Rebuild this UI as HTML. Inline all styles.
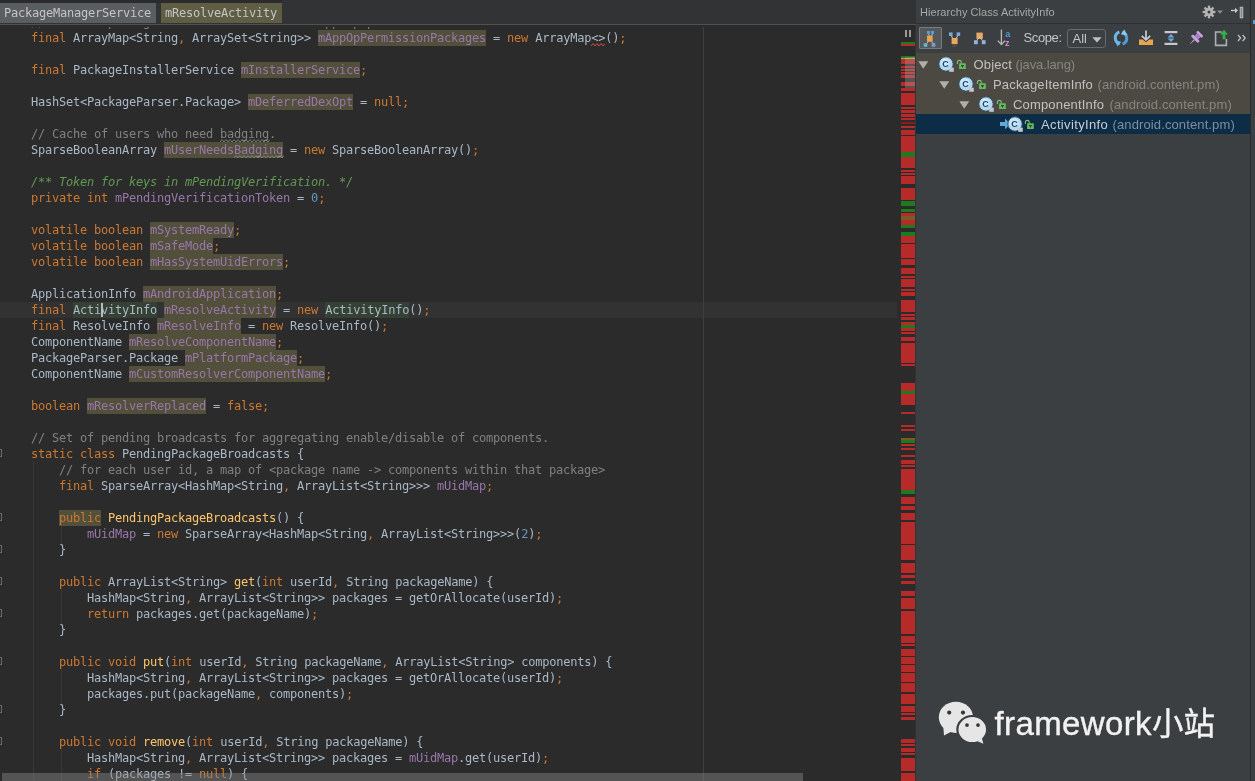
<!DOCTYPE html>
<html lang="en">
<head>
<meta charset="utf-8">
<title>PackageManagerService - Hierarchy</title>
<style>
html,body{margin:0;padding:0;background:#2b2b2b;}
body{width:1255px;height:781px;overflow:hidden;position:relative;font-family:"Liberation Sans","Noto Sans CJK SC",sans-serif;}
*{box-sizing:border-box;}
i,b,u{font-style:normal;font-weight:normal;text-decoration:none;}
#ed{position:absolute;left:0;top:0;width:916px;height:781px;background:#2b2b2b;overflow:hidden;}
#crumb{z-index:3;position:absolute;left:0;top:0;width:916px;height:24px;background:#313335;}
#crumb .topstrip{position:absolute;left:0;top:0;width:282px;height:3px;background:#2b2b2d;}
#crumbline{z-index:3;position:absolute;left:0;top:24px;width:916px;height:1px;background:#515151;}
.tab{position:absolute;top:3px;height:20px;line-height:20px;font-family:"DejaVu Sans Mono","Liberation Mono",monospace;font-size:12px;letter-spacing:-0.224px;color:#c4c4c4;padding-left:4px;white-space:pre;}
#tab1{left:0;width:156px;background:#5b5e60;}
#tab2{left:161px;width:121px;background:#5f5e45;}
#code{position:absolute;left:3px;top:0;width:900px;height:781px;font-family:"DejaVu Sans Mono","Liberation Mono",monospace;font-size:12px;letter-spacing:-0.224px;color:#a9b7c6;}
.l{position:absolute;left:0;height:16px;line-height:16px;white-space:pre;}
#curline{position:absolute;left:0;top:302px;width:897px;height:16px;background:#323232;}
.k{color:#cc7832;}
.f{color:#9876aa;}
.m{color:#ffc66d;}
.n{color:#6897bb;}
.c{color:#808080;}
.d{color:#629755;font-style:italic;}
.w{background:#52503a;display:inline-block;height:16px;}
.id{background:#344134;display:inline-block;height:16px;}
.ty{text-decoration:underline wavy #6a8759;text-decoration-thickness:1px;text-underline-offset:2px;}
.er{text-decoration:underline wavy #bc3f3c;text-decoration-thickness:1px;text-underline-offset:2px;}
#margin{position:absolute;left:703px;top:25px;width:1px;height:756px;background:#3f3f3f;}
.ig{position:absolute;width:1px;background:#393939;}
#caret{position:absolute;left:100.5px;top:303px;width:2px;height:14px;background:#bbbbbb;}
#hscroll{position:absolute;left:2px;top:772.5px;width:801px;height:9px;background:rgba(140,140,140,0.42);}
.fd{position:absolute;left:0;width:2px;height:8px;border:1px solid #6a6a6a;border-left:none;}
#stripe{position:absolute;left:895px;top:25px;width:21px;height:756px;background:#2b2b2b;}
#marks i{position:absolute;left:901px;width:14px;display:block;}
#thumb{position:absolute;left:905px;top:57px;width:10px;height:31px;background:rgba(190,190,190,0.28);}
#pause{position:absolute;left:905px;top:30px;width:6px;height:7px;border-left:2px solid #9a9a9a;border-right:2px solid #9a9a9a;}
#panel{position:absolute;left:916px;top:0;width:339px;height:781px;background:#3c3f41;}
#pborder{position:absolute;left:915px;top:0;width:1px;height:781px;background:#313335;}

#phead{position:absolute;left:0;top:0;width:334px;height:23px;}
#ptitle{position:absolute;left:4px;top:5px;font-size:11px;letter-spacing:0.05px;line-height:14px;color:#a8a8a8;white-space:pre;}
#pheadline{position:absolute;left:0;top:23px;width:334px;height:1px;background:#2e3032;}
#tbar{position:absolute;left:0;top:24px;width:334px;height:29px;}
#btn1{position:absolute;left:3px;top:3px;width:23px;height:22px;border:1px solid #787b7d;background:#54585a;border-radius:1px;}
#scope{position:absolute;left:107.500px;top:6px;font-size:13px;letter-spacing:-0.38px;line-height:16px;color:#c4c4c4;white-space:pre;}
#combo{position:absolute;left:151px;top:5px;width:39px;height:19px;border:1px solid #676a6c;border-radius:3px;background:#3c3f41;}
#combo span{position:absolute;left:4.500px;top:0.500px;font-size:13px;line-height:16px;color:#c4c4c4;}
#treebg{position:absolute;left:0;top:53px;width:334px;height:61px;background:#4b4941;}
#sel{position:absolute;left:0;top:114px;width:334px;height:20px;background:#0d2d47;}
.row{position:absolute;left:0;width:334px;height:20px;}
.row .arr{position:absolute;top:7px;width:11px;height:8px;}
.row .ci{position:absolute;top:2px;width:17px;height:17px;}
.row .lk{position:absolute;top:5px;width:10px;height:11px;}
.row span{position:absolute;top:3px;font-size:13px;line-height:16px;white-space:pre;}
.nm{color:#c0c0c0;}
.pk{color:#868680;}
#prb{position:absolute;left:334px;top:0;width:1px;height:781px;background:#2b2b2b;}
#bluedot{position:absolute;left:337px;top:20px;width:2px;height:4px;background:#5a9fd4;}
#wm{position:absolute;left:21px;top:701px;width:300px;height:48px;}
#wmt{-webkit-text-stroke:0.4px #f2f2f2;position:absolute;left:57.500px;top:1px;font-family:"Liberation Sans","Noto Sans CJK SC",sans-serif;font-size:33px;line-height:44px;color:#f2f2f2;white-space:pre;}
#t1{letter-spacing:0.15px}#p1{letter-spacing:-0.1px}#t2{letter-spacing:0.16px}#p2,#p3,#p4{letter-spacing:0.12px}#t3{letter-spacing:0.17px}#t4{letter-spacing:0.36px}
#wmt b{letter-spacing:0.38px}#wmt i{font-size:31.500px}
.wv{position:absolute;}
#topcover{position:absolute;z-index:3;left:0;top:25px;width:897px;height:2px;background:#2b2b2b;}
#t4{color:#c6cdd3}#p4{color:#7b8ea0}
#code,#crumb,#panel{will-change:transform;}
</style>
</head>
<body>
<div id="ed">
  <div id="crumb"><div class="topstrip"></div>
    <div class="tab" id="tab1">PackageManagerService</div>
    <div class="tab" id="tab2">mResolveActivity</div>
  </div>
  <div id="crumbline"></div><div id="topcover"></div>
  <div id="curline"></div>
  <div id="margin"></div>
  <div class="ig" style="left:33px;top:462px;height:319px"></div>
  <div class="ig" style="left:61px;top:526px;height:20px"></div>
  <div class="ig" style="left:61px;top:590px;height:36px"></div>
  <div class="ig" style="left:61px;top:670px;height:36px"></div>
  <div class="ig" style="left:61px;top:750px;height:31px"></div>
  <div id="code">
<div class="l" style="top:14px">    <span class="c">// List of packages associated with each app op permission.</span></div>
<div class="l" style="top:30px">    <b class="k">final</b> ArrayMap&lt;String<b class="k">,</b> ArraySet&lt;String&gt;&gt; <b class="f w">mAppOpPermissionPackages</b> = <b class="k">new</b> ArrayMap&lt;&gt;()<b class="k">;</b></div>
<div class="l" style="top:46px"></div>
<div class="l" style="top:62px">    <b class="k">final</b> PackageInstallerService <b class="f w">mInstallerService</b><b class="k">;</b></div>
<div class="l" style="top:78px"></div>
<div class="l" style="top:94px">    HashSet&lt;PackageParser.Package&gt; <b class="f w">mDeferredDexOpt</b> = <b class="k">null</b><b class="k">;</b></div>
<div class="l" style="top:110px"></div>
<div class="l" style="top:126px">    <span class="c">// Cache of users who need badging.</span></div>
<div class="l" style="top:142px">    SparseBooleanArray <b class="f w">mUserNeedsBadging</b> = <b class="k">new</b> SparseBooleanArray()<b class="k">;</b></div>
<div class="l" style="top:158px"></div>
<div class="l" style="top:174px">    <i class="d">/** Token for keys in mPendingVerification. */</i></div>
<div class="l" style="top:190px">    <b class="k">private</b> <b class="k">int</b> <b class="f">mPendingVerificationToken</b> = <b class="n">0</b><b class="k">;</b></div>
<div class="l" style="top:206px"></div>
<div class="l" style="top:222px">    <b class="k">volatile</b> <b class="k">boolean</b> <b class="f w">mSystemReady</b><b class="k">;</b></div>
<div class="l" style="top:238px">    <b class="k">volatile</b> <b class="k">boolean</b> <b class="f w">mSafeMode</b><b class="k">;</b></div>
<div class="l" style="top:254px">    <b class="k">volatile</b> <b class="k">boolean</b> <b class="f w">mHasSystemUidErrors</b><b class="k">;</b></div>
<div class="l" style="top:270px"></div>
<div class="l" style="top:286px">    ApplicationInfo <b class="f w">mAndroidApplication</b><b class="k">;</b></div>
<div class="l cur" style="top:302px">    <b class="k">final</b> <b class="id">ActivityInfo</b> <b class="f w">mResolveActivity</b> = <b class="k">new</b> <b class="id">ActivityInfo</b>()<b class="k">;</b></div>
<div class="l" style="top:318px">    <b class="k">final</b> ResolveInfo <b class="f w">mResolveInfo</b> = <b class="k">new</b> ResolveInfo()<b class="k">;</b></div>
<div class="l" style="top:334px">    ComponentName <b class="f w">mResolveComponentName</b><b class="k">;</b></div>
<div class="l" style="top:350px">    PackageParser.Package <b class="f w">mPlatformPackage</b><b class="k">;</b></div>
<div class="l" style="top:366px">    ComponentName <b class="f w">mCustomResolverComponentName</b><b class="k">;</b></div>
<div class="l" style="top:382px"></div>
<div class="l" style="top:398px">    <b class="k">boolean</b> <b class="f w">mResolverReplaced</b> = <b class="k">false</b><b class="k">;</b></div>
<div class="l" style="top:414px"></div>
<div class="l" style="top:430px">    <span class="c">// Set of pending broadcasts for aggregating enable/disable of components.</span></div>
<div class="l" style="top:446px">    <b class="k">static</b> <b class="k">class</b> PendingPackageBroadcasts {</div>
<div class="l" style="top:462px">        <span class="c">// for each user id, a map of &lt;package name -&gt; components within that package&gt;</span></div>
<div class="l" style="top:478px">        <b class="k">final</b> SparseArray&lt;HashMap&lt;String<b class="k">,</b> ArrayList&lt;String&gt;&gt;&gt; <b class="f">mUidMap</b><b class="k">;</b></div>
<div class="l" style="top:494px"></div>
<div class="l" style="top:510px">        <b class="k w">public</b> <b class="m">PendingPackageBroadcasts</b>() {</div>
<div class="l" style="top:526px">            <b class="f">mUidMap</b> = <b class="k">new</b> SparseArray&lt;HashMap&lt;String<b class="k">,</b> ArrayList&lt;String&gt;&gt;&gt;(<b class="n">2</b>)<b class="k">;</b></div>
<div class="l" style="top:542px">        }</div>
<div class="l" style="top:558px"></div>
<div class="l" style="top:574px">        <b class="k">public</b> ArrayList&lt;String&gt; <b class="m">get</b>(<b class="k">int</b> userId<b class="k">,</b> String packageName) {</div>
<div class="l" style="top:590px">            HashMap&lt;String<b class="k">,</b> ArrayList&lt;String&gt;&gt; packages = getOrAllocate(userId)<b class="k">;</b></div>
<div class="l" style="top:606px">            <b class="k">return</b> packages.get(packageName)<b class="k">;</b></div>
<div class="l" style="top:622px">        }</div>
<div class="l" style="top:638px"></div>
<div class="l" style="top:654px">        <b class="k">public</b> <b class="k">void</b> <b class="m">put</b>(<b class="k">int</b> userId<b class="k">,</b> String packageName<b class="k">,</b> ArrayList&lt;String&gt; components) {</div>
<div class="l" style="top:670px">            HashMap&lt;String<b class="k">,</b> ArrayList&lt;String&gt;&gt; packages = getOrAllocate(userId)<b class="k">;</b></div>
<div class="l" style="top:686px">            packages.put(packageName<b class="k">,</b> components)<b class="k">;</b></div>
<div class="l" style="top:702px">        }</div>
<div class="l" style="top:718px"></div>
<div class="l" style="top:734px">        <b class="k">public</b> <b class="k">void</b> <b class="m">remove</b>(<b class="k">int</b> userId<b class="k">,</b> String packageName) {</div>
<div class="l" style="top:750px">            HashMap&lt;String<b class="k">,</b> ArrayList&lt;String&gt;&gt; packages = <b class="f">mUidMap</b>.get(userId)<b class="k">;</b></div>
<div class="l" style="top:766px">            <b class="k">if</b> (packages != <b class="k">null</b>) {</div>
  </div>
  <svg class="wv" style="left:220px;top:139px" width="50" height="4" viewBox="0 0 50 4"><polyline points="0,3 2,0.5 4,3 6,0.5 8,3 10,0.5 12,3 14,0.5 16,3 18,0.5 20,3 22,0.5 24,3 26,0.5 28,3 30,0.5 32,3 34,0.5 36,3 38,0.5 40,3 42,0.5 44,3 46,0.5 48,3 50,0.5" fill="none" stroke="#8d9a84" stroke-width="1" opacity="0.75"/></svg><svg class="wv" style="left:234px;top:155px" width="50" height="4" viewBox="0 0 50 4"><polyline points="0,3 2,0.5 4,3 6,0.5 8,3 10,0.5 12,3 14,0.5 16,3 18,0.5 20,3 22,0.5 24,3 26,0.5 28,3 30,0.5 32,3 34,0.5 36,3 38,0.5 40,3 42,0.5 44,3 46,0.5 48,3 50,0.5" fill="none" stroke="#8d9a84" stroke-width="1" opacity="0.75"/></svg><svg class="wv" style="left:591px;top:43px" width="14" height="4" viewBox="0 0 14 4"><polyline points="0,3 2,0.5 4,3 6,0.5 8,3 10,0.5 12,3 14,0.5" fill="none" stroke="#d04a45" stroke-width="1" opacity="1"/></svg>
  <div id="caret"></div>
  <div id="folds"><i class="fd" style="top:449px"></i><i class="fd" style="top:513px"></i><i class="fd" style="top:545px"></i><i class="fd" style="top:577px"></i><i class="fd" style="top:609px"></i><i class="fd" style="top:657px"></i><i class="fd" style="top:705px"></i><i class="fd" style="top:737px"></i></div>
  <div id="hscroll"></div>
</div>
<div id="marks"><i style="top:42px;height:2px;background:#1f7a1f"></i><i style="top:44px;height:2px;background:#b62a2a"></i><i style="top:56px;height:2px;background:#1f7a1f"></i><i style="top:58px;height:1px;background:#b8a445"></i><i style="top:59px;height:5px;background:#b62a2a"></i><i style="top:66px;height:2px;background:#b62a2a"></i><i style="top:69px;height:2px;background:#b62a2a"></i><i style="top:72px;height:2px;background:#b62a2a"></i><i style="top:75px;height:3px;background:#b62a2a"></i><i style="top:82px;height:4px;background:#b62a2a"></i><i style="top:88px;height:3px;background:#b62a2a"></i><i style="top:93px;height:12px;background:#b62a2a"></i><i style="top:107px;height:2px;background:#b62a2a"></i><i style="top:110px;height:3px;background:#b62a2a"></i><i style="top:114px;height:3px;background:#b62a2a"></i><i style="top:118px;height:2px;background:#b62a2a"></i><i style="top:122px;height:2px;background:#7f2020"></i><i style="top:126px;height:2px;background:#b62a2a"></i><i style="top:130px;height:5px;background:#b62a2a"></i><i style="top:136px;height:16px;background:#b62a2a"></i><i style="top:152px;height:5px;background:#1f7a1f"></i><i style="top:157px;height:11px;background:#b62a2a"></i><i style="top:170px;height:2px;background:#b62a2a"></i><i style="top:173px;height:2px;background:#b62a2a"></i><i style="top:176px;height:8px;background:#b62a2a"></i><i style="top:188px;height:12px;background:#b62a2a"></i><i style="top:201px;height:5px;background:#1f7a1f"></i><i style="top:209px;height:3px;background:#1f7a1f"></i><i style="top:213px;height:3px;background:#b62a2a"></i><i style="top:216px;height:4px;background:#7a5a25"></i><i style="top:220px;height:5px;background:#b62a2a"></i><i style="top:225px;height:3px;background:#1f7a1f"></i><i style="top:232px;height:4px;background:#1f7a1f"></i><i style="top:236px;height:7px;background:#b62a2a"></i><i style="top:244px;height:14px;background:#b62a2a"></i><i style="top:259px;height:6px;background:#b62a2a"></i><i style="top:268px;height:6px;background:#b62a2a"></i><i style="top:276px;height:2px;background:#b62a2a"></i><i style="top:279px;height:8px;background:#b62a2a"></i><i style="top:289px;height:2px;background:#b62a2a"></i><i style="top:292px;height:4px;background:#b62a2a"></i><i style="top:300px;height:12px;background:#b62a2a"></i><i style="top:314px;height:2px;background:#b62a2a"></i><i style="top:317px;height:3px;background:#b62a2a"></i><i style="top:322px;height:3px;background:#b62a2a"></i><i style="top:325px;height:3px;background:#1f7a1f"></i><i style="top:328px;height:3px;background:#b62a2a"></i><i style="top:332px;height:2px;background:#b62a2a"></i><i style="top:337px;height:4px;background:#b62a2a"></i><i style="top:343px;height:20px;background:#b62a2a"></i><i style="top:364px;height:2px;background:#b62a2a"></i><i style="top:383px;height:8px;background:#b62a2a"></i><i style="top:391px;height:3px;background:#1f7a1f"></i><i style="top:394px;height:11px;background:#b62a2a"></i><i style="top:412px;height:2px;background:#b62a2a"></i><i style="top:425px;height:2px;background:#b62a2a"></i><i style="top:429px;height:2px;background:#b62a2a"></i><i style="top:438px;height:2px;background:#7a5a25"></i><i style="top:440px;height:3px;background:#1f7a1f"></i><i style="top:444px;height:2px;background:#b62a2a"></i><i style="top:448px;height:2px;background:#b62a2a"></i><i style="top:455px;height:2px;background:#b62a2a"></i><i style="top:460px;height:4px;background:#b62a2a"></i><i style="top:465px;height:2px;background:#b62a2a"></i><i style="top:469px;height:21px;background:#b62a2a"></i><i style="top:490px;height:4px;background:#1f7a1f"></i><i style="top:497px;height:7px;background:#b62a2a"></i><i style="top:506px;height:4px;background:#b62a2a"></i><i style="top:513px;height:7px;background:#b62a2a"></i><i style="top:522px;height:22px;background:#b62a2a"></i><i style="top:545px;height:15px;background:#b62a2a"></i><i style="top:563px;height:10px;background:#b62a2a"></i><i style="top:575px;height:3px;background:#b62a2a"></i><i style="top:581px;height:3px;background:#b62a2a"></i><i style="top:591px;height:5px;background:#b62a2a"></i><i style="top:598px;height:11px;background:#b62a2a"></i><i style="top:611px;height:23px;background:#b62a2a"></i><i style="top:636px;height:7px;background:#b62a2a"></i><i style="top:644px;height:2px;background:#b62a2a"></i><i style="top:649px;height:7px;background:#b62a2a"></i><i style="top:657px;height:7px;background:#b62a2a"></i><i style="top:665px;height:7px;background:#b62a2a"></i><i style="top:673px;height:9px;background:#b62a2a"></i><i style="top:683px;height:9px;background:#b62a2a"></i><i style="top:694px;height:10px;background:#b62a2a"></i><i style="top:706px;height:6px;background:#b62a2a"></i><i style="top:713px;height:2px;background:#b62a2a"></i><i style="top:717px;height:3px;background:#b62a2a"></i><i style="top:739px;height:4px;background:#b62a2a"></i><i style="top:744px;height:2px;background:#b62a2a"></i><i style="top:748px;height:4px;background:#b62a2a"></i><i style="top:753px;height:2px;background:#b62a2a"></i><i style="top:758px;height:13px;background:#b62a2a"></i><i style="top:773px;height:8px;background:#b62a2a"></i></div>
<div id="thumb"></div>
<div id="pause"></div>
<div id="pborder"></div>
<div id="panel">
<div id="phead"><span id="ptitle">Hierarchy Class ActivityInfo</span>
<svg id="gear" width="22" height="16" viewBox="0 0 22 16" style="position:absolute;left:286px;top:4px">
<g fill="none" stroke="#b4b4b4" stroke-width="2.4">
<line x1="7" y1="1.6" x2="7" y2="14.4"/><line x1="0.6" y1="8" x2="13.4" y2="8"/>
<line x1="2.5" y1="3.5" x2="11.5" y2="12.5"/><line x1="11.5" y1="3.5" x2="2.5" y2="12.5"/>
</g>
<circle cx="7" cy="8" r="4.3" fill="#b4b4b4"/><circle cx="7" cy="8" r="1.5" fill="#3c3f41"/>
<path d="M15 6.5h6l-3 3.2z" fill="#8c8c8c"/>
</svg>
<svg id="hide" width="16" height="16" viewBox="0 0 16 16" style="position:absolute;left:314px;top:4px">
<path d="M1 6.5h5.5" stroke="#c8c8c8" stroke-width="1.4" fill="none"/><path d="M5 3.8l3 2.7-3 2.7z" fill="#c8c8c8"/>
<rect x="10.2" y="3.2" width="2.6" height="10.6" fill="#8a8a8a" stroke="#c0c0c0" stroke-width="0.9"/>
</svg>
</div>
<div id="pheadline"></div>
<div id="tbar">
<div id="btn1"></div>
<svg width="24" height="24" viewBox="0 0 24 24" style="position:absolute;left:3px;top:2px">
<g stroke="#b9c2c8" stroke-width="0.9" fill="none"><path d="M9.500 8L10.500 10M13.500 8L12.500 10M9.500 15.500l-2.500 2.500M12.500 15.500l2 2.500"/></g>
<rect x="8" y="5" width="3" height="3" fill="#5b9bd5"/><rect x="12" y="5" width="3" height="3" fill="#5b9bd5"/>
<rect x="8" y="9.600" width="5.600" height="6.200" fill="#e8a550"/>
<rect x="4.700" y="17.200" width="3.600" height="3.600" fill="#62b8c5"/><rect x="12.700" y="17.200" width="3.600" height="3.600" fill="#7a9ed0"/>
</svg>
<svg width="24" height="24" viewBox="0 0 24 24" style="position:absolute;left:26px;top:2px">
<g stroke="#d8d0c0" stroke-width="1" fill="none"><path d="M9.5 10L11 13M15.5 10L14 13"/></g>
<rect x="7" y="6.4" width="3.6" height="3.6" fill="#7aa7d6"/><rect x="14.6" y="6.4" width="3.6" height="3.6" fill="#7aa7d6"/>
<rect x="9.6" y="12" width="6" height="6" fill="#e8a866"/>
<g stroke="#6b5a3a" stroke-width="0.8"><path d="M11 18v3M12.6 18v3M14.2 18v3"/></g>
</svg>
<svg width="24" height="24" viewBox="0 0 24 24" style="position:absolute;left:50px;top:2px">
<rect x="10.4" y="6.6" width="6.4" height="6.2" fill="#e8a866"/>
<g stroke="#d8d0c0" stroke-width="1" fill="none"><path d="M13.6 11.5L10.5 14.5M13.6 11.5L16.8 14.5"/></g>
<rect x="8" y="14.2" width="3.8" height="4" fill="#8fb3d9"/><rect x="15.8" y="14.2" width="3.8" height="4" fill="#8fb3d9"/>
</svg>
<svg width="24" height="24" viewBox="0 0 24 24" style="position:absolute;left:74px;top:2px">
<g stroke="#b8b8b8" stroke-width="1.3" fill="none"><path d="M11.4 3.5v15M7.8 14.6l3.6 4 3.6-4"/></g>
<text x="15.2" y="11.2" font-family="Liberation Sans, sans-serif" font-size="9" font-weight="bold" fill="#4a9ad8">a</text>
<text x="15" y="20" font-family="Liberation Sans, sans-serif" font-size="9" font-weight="bold" fill="#c58bd0">z</text>
</svg>
<span id="scope">Scope:</span>
<div id="combo"><span>All</span><svg width="10" height="6" viewBox="0 0 10 6" style="position:absolute;left:24px;top:6.5px"><path d="M0.3 0.3h9.4L5 5.6z" fill="#c0c0c0"/></svg></div>
<svg width="18" height="18" viewBox="0 0 18 18" style="position:absolute;left:196px;top:5px">
<g fill="none" stroke-width="3"><path d="M7.800 14.800A6.600 6.400 0 0 1 7.400 2.800" stroke="#6db6e6"/><path d="M10.200 3.200A6.600 6.400 0 0 1 10.600 15.200" stroke="#4f9bd6"/></g>
<path d="M2.600 11.600l6.600 1.200-3.600 4.800z" fill="#6db6e6"/><path d="M15.400 6.400L8.800 5.200l3.600-4.800z" fill="#8ccbef"/>
</svg>
<svg width="18" height="18" viewBox="0 0 18 18" style="position:absolute;left:221px;top:5px">
<g stroke="#c8ccd4" stroke-width="1.7" fill="none"><path d="M9 1.5v9M4.8 6.8l4.2 4 4.2-4"/></g>
<path d="M2 10.6h3.6l3.4 2.6 3.4-2.6H16V16H2z" fill="#e8a550"/>
</svg>
<svg width="18" height="18" viewBox="0 0 18 18" style="position:absolute;left:246px;top:5px">
<rect x="2.6" y="2" width="12.8" height="2.2" fill="#c4c9cf"/><rect x="2.6" y="13.8" width="12.8" height="2.2" fill="#c4c9cf"/>
<path d="M9 5l3.4 3.4H5.6z" fill="#6fa8d6"/><path d="M9 13l3.4-3.4H5.6z" fill="#6fa8d6"/>
</svg>
<svg width="18" height="18" viewBox="0 0 18 18" style="position:absolute;left:270px;top:6px">
<g transform="rotate(45 9 9)">
<rect x="5" y="1" width="8" height="2.6" rx="1.2" fill="#c9a3df"/>
<rect x="6.4" y="3.4" width="5.2" height="4.2" fill="#a77fc4"/>
<rect x="4" y="7.2" width="10" height="2.8" rx="1.3" fill="#c9a3df"/>
<path d="M8.3 10h1.4L9 17z" fill="#b8b0c0"/>
</g>
</svg>
<svg width="18" height="18" viewBox="0 0 18 18" style="position:absolute;left:296px;top:5px">
<path d="M9.6 3H3.6v13.4h10.8V10" fill="none" stroke="#aab0b4" stroke-width="1.6"/>
<path d="M12 0.8l4 4.8h-2.6v4.6h-2.8V5.6H8z" fill="#2fb344"/>
</svg>
<svg width="10" height="8" viewBox="0 0 10 8" style="position:absolute;left:321px;top:10px">
<g fill="none" stroke="#c4c4c4" stroke-width="1.2"><path d="M1 1l2.6 3L1 7M5.6 1l2.6 3-2.6 3"/></g>
</svg>
</div>
<div id="treebg"></div>
<div id="sel"></div>
<div class="row" style="top:54px">
<svg class="arr" style="left:2px"><path d="M0.3 0.3h10L5.3 7.8z" fill="#b0aea6"/></svg>
<svg class="ci" style="left:22px" viewBox="0 0 17 17"><circle cx="8" cy="8" r="7.2" fill="#b3d9f2" stroke="#2f5268" stroke-width="1"/><circle cx="7" cy="6.6" r="4.6" fill="#d4ebf9" opacity="0.7"/><text x="4.300" y="11.100" font-family="Liberation Sans, sans-serif" font-size="9" font-weight="bold" fill="#1a4468">C</text><rect x="11.200" y="11.700" width="4.600" height="4.100" fill="#c2c6ce"/></svg>
<svg class="lk" style="left:40px" viewBox="0 0 10 11"><path d="M1.400 5V3Q1.400 1.400 3.300 1.400Q5.200 1.400 5.200 3V4.600" fill="none" stroke="#86c07c" stroke-width="1.100"/><rect x="3.100" y="4.300" width="6.700" height="5.800" rx="0.600" fill="#68b862"/><path d="M4.900 5.900h3.200L6.500 8.900z" fill="#1f4a26"/></svg>
<span class="nm" style="left:57.5px" id="t1">Object</span><span class="pk" style="left:99.5px" id="p1">(java.lang)</span>
</div>
<div class="row" style="top:74px">
<svg class="arr" style="left:23px"><path d="M0.3 0.3h10L5.3 7.8z" fill="#b0aea6"/></svg>
<svg class="ci" style="left:42px" viewBox="0 0 17 17"><circle cx="8" cy="8" r="7.2" fill="#b3d9f2" stroke="#2f5268" stroke-width="1"/><circle cx="7" cy="6.6" r="4.6" fill="#d4ebf9" opacity="0.7"/><text x="4.300" y="11.100" font-family="Liberation Sans, sans-serif" font-size="9" font-weight="bold" fill="#1a4468">C</text><rect x="11.200" y="11.700" width="4.600" height="4.100" fill="#c2c6ce"/></svg>
<svg class="lk" style="left:60px" viewBox="0 0 10 11"><path d="M1.400 5V3Q1.400 1.400 3.300 1.400Q5.200 1.400 5.200 3V4.600" fill="none" stroke="#86c07c" stroke-width="1.100"/><rect x="3.100" y="4.300" width="6.700" height="5.800" rx="0.600" fill="#68b862"/><path d="M4.900 5.900h3.200L6.500 8.900z" fill="#1f4a26"/></svg>
<span class="nm" style="left:77px" id="t2">PackageItemInfo</span><span class="pk" style="left:181.5px" id="p2">(android.content.pm)</span>
</div>
<div class="row" style="top:94px">
<svg class="arr" style="left:43px"><path d="M0.3 0.3h10L5.3 7.8z" fill="#b0aea6"/></svg>
<svg class="ci" style="left:62px" viewBox="0 0 17 17"><circle cx="8" cy="8" r="7.2" fill="#b3d9f2" stroke="#2f5268" stroke-width="1"/><circle cx="7" cy="6.6" r="4.6" fill="#d4ebf9" opacity="0.7"/><text x="4.300" y="11.100" font-family="Liberation Sans, sans-serif" font-size="9" font-weight="bold" fill="#1a4468">C</text><rect x="11.200" y="11.700" width="4.600" height="4.100" fill="#c2c6ce"/></svg>
<svg class="lk" style="left:80px" viewBox="0 0 10 11"><path d="M1.400 5V3Q1.400 1.400 3.300 1.400Q5.200 1.400 5.200 3V4.600" fill="none" stroke="#86c07c" stroke-width="1.100"/><rect x="3.100" y="4.300" width="6.700" height="5.800" rx="0.600" fill="#68b862"/><path d="M4.900 5.900h3.200L6.500 8.900z" fill="#1f4a26"/></svg>
<span class="nm" style="left:97px" id="t3">ComponentInfo</span><span class="pk" style="left:193.5px" id="p3" >(android.content.pm)</span>
</div>
<div class="row" style="top:114px">
<svg style="position:absolute;left:83px;top:4px" width="12" height="12" viewBox="0 0 12 12"><path d="M1 3.900h5V0.500L11.500 5.900 6 11.300V7.900H1z" fill="#62a8d8"/></svg>
<svg class="ci" style="left:91px" viewBox="0 0 17 17"><circle cx="8" cy="8" r="7.2" fill="#b3d9f2" stroke="#2f5268" stroke-width="1"/><circle cx="7" cy="6.6" r="4.6" fill="#d4ebf9" opacity="0.7"/><text x="4.300" y="11.100" font-family="Liberation Sans, sans-serif" font-size="9" font-weight="bold" fill="#1a4468">C</text><rect x="11.200" y="11.700" width="4.600" height="4.100" fill="#c2c6ce"/></svg>
<svg class="lk" style="left:108px" viewBox="0 0 10 11"><path d="M1.400 5V3Q1.400 1.400 3.300 1.400Q5.200 1.400 5.200 3V4.600" fill="none" stroke="#86c07c" stroke-width="1.100"/><rect x="3.100" y="4.300" width="6.700" height="5.800" rx="0.600" fill="#68b862"/><path d="M4.900 5.900h3.200L6.500 8.900z" fill="#1f4a26"/></svg>
<span class="nm" style="left:125px" id="t4">ActivityInfo</span><span class="pk" style="left:196.5px" id="p4">(android.content.pm)</span>
</div>
<div id="prb"></div><div id="bluedot"></div>
<div id="wm">
<svg width="56" height="46" viewBox="0 0 56 46" style="position:absolute;left:0;top:0">
<path d="M6.300 25.500L7 34.500l7.500-4z" fill="#e6e6e6"/>
<ellipse cx="18.9" cy="16.3" rx="17.1" ry="15.6" fill="#e6e6e6"/>
<circle cx="12.2" cy="11.6" r="2.1" fill="#35383a"/><circle cx="26" cy="11.6" r="2.1" fill="#35383a"/>
<ellipse cx="35.25" cy="28.6" rx="14.9" ry="13.6" fill="#e6e6e6" stroke="#3c3f41" stroke-width="2.200"/>
<path d="M40.500 40.200L46.400 42.800l-1.600-5.800z" fill="#e6e6e6"/>
<circle cx="30" cy="24.1" r="1.9" fill="#35383a"/><circle cx="41" cy="24.1" r="1.9" fill="#35383a"/>
</svg>
<span id="wmt"><b>framework</b><i>小站</i></span>
</div>

</div>
</body>
</html>
